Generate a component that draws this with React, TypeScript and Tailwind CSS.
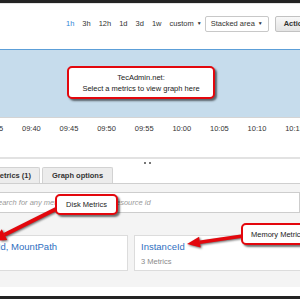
import React from "react";

const TIMES = ["09:35", "09:40", "09:45", "09:50", "09:55", "10:00", "10:05", "10:10", "10:15"];
const RANGES = ["1h", "3h", "12h", "1d", "3d", "1w"];

function Callout({ className, children }: { className: string; children: React.ReactNode }) {
  return (
    <div
      className={
        "absolute flex items-center rounded-[5px] border-[2.5px] border-[#e3070d] bg-white text-[7.5px] leading-[11px] text-[#222] shadow-[2px_2px_2px_rgba(0,0,0,0.55)] " +
        className
      }
    >
      {children}
    </div>
  );
}

export default function App() {
  return (
    <div className="relative h-[300px] w-[300px] overflow-hidden bg-white font-['Liberation_Sans',Arial,sans-serif] text-[7.5px] text-[#333]">
      <div className="h-[3px] bg-[#232323]" />
      <div className="h-px bg-[#e4e4e4]" />

      {/* toolbar */}
      <div className="flex h-[45px] items-start pt-[12px]">
        <div className="flex h-[16px] items-center gap-[8px] pl-[66px]">
          {RANGES.map((r, i) => (
            <span key={r} className={i === 0 ? "text-[#2f86d6]" : "text-[#333]"}>
              {r}
            </span>
          ))}
          <span className="flex items-center gap-[3px]">
            custom <span className="text-[5px]">▼</span>
          </span>
        </div>
        <div className="ml-[3px] flex h-[16px] w-[64px] shrink-0 items-center gap-[3px] rounded-[2px] border border-[#c8c8c8] bg-white pl-[5px]">
          Stacked area <span className="text-[5px]">▼</span>
        </div>
        <div className="ml-[6px] flex h-[16px] shrink-0 items-center rounded-[2px] border border-[#c2c2c2] bg-gradient-to-b from-[#f8f8f8] to-[#e4e4e4] px-[8px] font-bold">
          Actions
        </div>
      </div>

      {/* chart */}
      <div className="h-[69px] border-t-[1.5px] border-b border-t-[#5c9fd8] border-b-[#d4d4d4] bg-[#c6dcec]" />

      {/* axis */}
      <div className="flex h-[39px] -ml-[25px] pt-[6px] text-[7.5px] leading-[9px]">
        {TIMES.map((t) => (
          <span key={t} className="w-[37.6px] shrink-0 text-center">
            {t}
          </span>
        ))}
      </div>

      <div className="h-[2px] bg-[#e2e2e2]" />
      <div className="flex h-[9px] justify-center pt-[3px]">
        <div className="ml-[-6px] h-[2px] w-[7px] border-t-2 border-dotted border-[#777]" />
      </div>

      {/* tabs */}
      <div className="flex h-[16px] items-end gap-[2px] border-b border-[#cfcfcf]">
        <div className="flex w-[40px] shrink-0 justify-end">
          <div className="flex h-[16px] shrink-0 items-center rounded-t-[2px] border border-b-0 border-[#d2d2d2] bg-[#ececec] px-[8px] font-bold text-[#333]">
            Graphed metrics (1)
          </div>
        </div>
        <div className="flex h-[16px] w-[71px] shrink-0 items-center justify-center rounded-t-[2px] border border-b-0 border-[#d2d2d2] bg-[#ececec] font-bold text-[#333]">
          Graph options
        </div>
      </div>

      {/* metrics panel */}
      <div className="h-[103px] bg-[#f4f4f4] pt-[8px]">
        <div className="-ml-[16px] flex h-[21px] items-center border border-[#cdcdcd] bg-white pl-[8px] italic text-[#9a9a9a]">
          Search for any metric, dimension or resource id
        </div>
        <div className="mt-[22px] flex h-[36px] gap-[6px] -ml-[45px]">
          <div className="w-[173px] shrink-0 border border-[#dcdcdc] bg-white px-[6px] pt-[4px]">
            <div className="text-[9.5px] leading-[13px] text-[#2f6fbf]">InstanceId, MountPath</div>
            <div className="mt-[3px] text-[#8a8a8a]">5 Metrics</div>
          </div>
          <div className="w-[173px] shrink-0 border border-[#dcdcdc] bg-white px-[6px] pt-[4px]">
            <div className="text-[9.5px] leading-[13px] text-[#2f6fbf]">InstanceId</div>
            <div className="mt-[3px] text-[#8a8a8a]">3 Metrics</div>
          </div>
        </div>
      </div>
      <div className="h-[9px] bg-white" />
      <div className="h-[3px] bg-[#232323]" />

      {/* annotations */}
      <Callout className="left-[67px] top-[66px] h-[33px] w-[148px] flex-col justify-center">
        <span>TecAdmin.net:</span>
        <span>Select a metrics to view graph here</span>
      </Callout>

      <svg
        className="pointer-events-none absolute inset-0 drop-shadow-[1.5px_1.5px_1px_rgba(0,0,0,0.6)]"
        width="300"
        height="300"
        viewBox="0 0 300 300"
      >
        <line x1="62" y1="206" x2="4.5" y2="234.7" stroke="#e3070d" strokeWidth="4" />
        <polygon points="-8,241 7.2,240.1 1.8,229.3" fill="#e3070d" />
        <line x1="246" y1="235.6" x2="199.9" y2="242.2" stroke="#e3070d" strokeWidth="3.5" />
        <polygon points="187,244 200.7,247.6 199.1,236.7" fill="#e3070d" />
      </svg>

      <Callout className="left-[55px] top-[194px] h-[21px] w-[63px] justify-center">Disk Metrics</Callout>
      <Callout className="left-[241px] top-[223px] h-[22px] w-[80px] pl-[8px]">Memory Metrics</Callout>
    </div>
  );
}
